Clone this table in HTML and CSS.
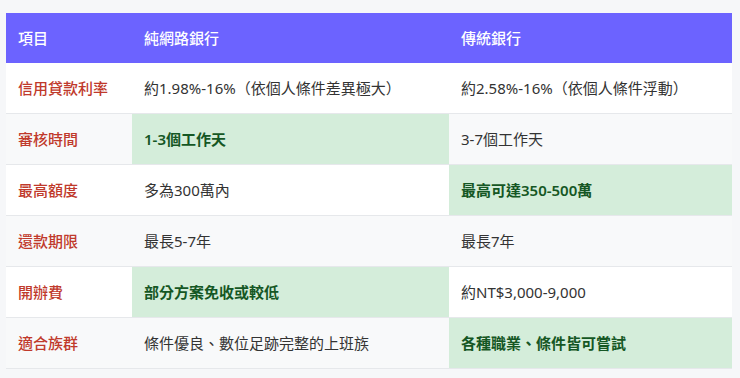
FILE: index.html
```html
<!DOCTYPE html>
<html lang="zh-Hant">
<head>
<meta charset="utf-8">
<link rel="stylesheet" href="styles.css">
</head>
<body>
<div class="wrap">
<table class="cmp">
  <colgroup><col class="c1"><col class="c2"><col class="c3"></colgroup>
  <thead>
    <tr><th>項目</th><th>純網路銀行</th><th>傳統銀行</th></tr>
  </thead>
  <tbody>
    <tr><td class="label">信用貸款利率</td><td>約1.98%-16%（依個人條件差異極大）</td><td>約2.58%-16%（依個人條件浮動）</td></tr>
    <tr><td class="label">審核時間</td><td class="win">1-3個工作天</td><td>3-7個工作天</td></tr>
    <tr><td class="label">最高額度</td><td>多為300萬內</td><td class="win">最高可達350-500萬</td></tr>
    <tr><td class="label">還款期限</td><td>最長5-7年</td><td>最長7年</td></tr>
    <tr><td class="label">開辦費</td><td class="win">部分方案免收或較低</td><td>約NT$3,000-9,000</td></tr>
    <tr><td class="label">適合族群</td><td>條件優良、數位足跡完整的上班族</td><td class="win">各種職業、條件皆可嘗試</td></tr>
  </tbody>
</table>
</div>
</body>
</html>
```
FILE: styles.css
```css
html, body {
  margin: 0;
  padding: 0;
  background: #f6f7f9;
}
body {
  font-family: "Noto Sans", "Noto Sans CJK TC", sans-serif;
  font-size: 15px;
  color: #333333;
}
.wrap {
  padding: 13px 8px 0 6px;
}
.cmp {
  width: 726px;
  border-collapse: collapse;
  table-layout: fixed;
  background: #ffffff;
}
.c1 { width: 126px; }
.c2 { width: 317px; }
.c3 { width: 283px; }
.cmp th {
  background: #6c63ff;
  color: #ffffff;
  font-weight: 500;
  text-align: left;
  padding: 15px 12px;
  line-height: 20px;
}
.cmp td {
  padding: 15px 12px;
  line-height: 20px;
  border-bottom: 1px solid #e6e8eb;
  white-space: nowrap;
}
.cmp tbody tr:nth-child(even) td {
  background: #f8f9fa;
}
.cmp td.label {
  color: #c0392b;
  font-weight: 500;
}
.cmp tbody tr td.win {
  background: #d4edda;
  color: #155724;
  font-weight: 600;
}
```
